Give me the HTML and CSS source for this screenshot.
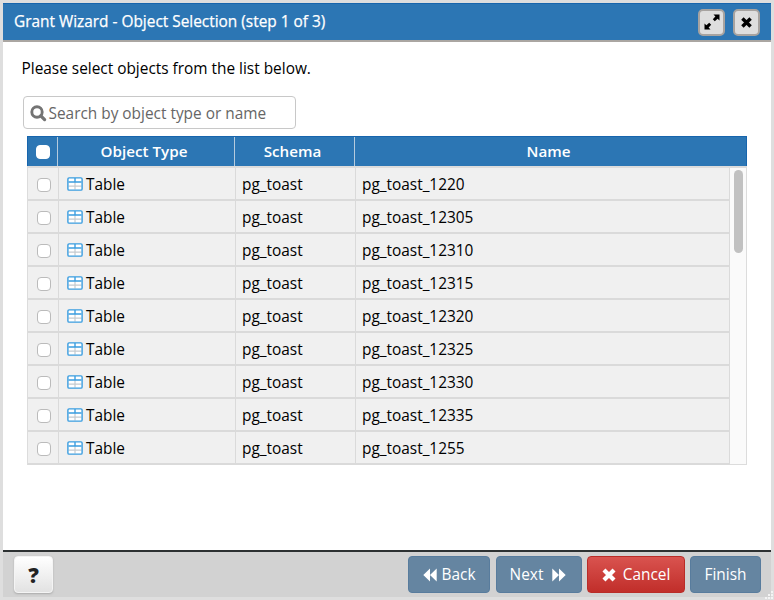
FILE: index.html
```html
<!DOCTYPE html>
<html lang="en">
<head>
<meta charset="utf-8">
<title>Grant Wizard</title>
<link rel="stylesheet" href="styles.css">
</head>
<body>
<svg class="defs" width="0" height="0" aria-hidden="true">
  <symbol id="icon-table" viewBox="0 0 16 14">
    <rect x="1" y="1" width="14" height="12" rx="1" fill="#fff"/>
    <path d="M1.5 9.2h13M8 5v7.5" stroke="#c4cacf" stroke-width="1.2"/>
    <path d="M1.5 5h13M8 1v4" stroke="#3a9de0" stroke-width="1.4"/>
    <rect x=".9" y=".9" width="14.2" height="12.2" rx="1.2" fill="none" stroke="#3a9de0" stroke-width="1.4"/>
  </symbol>
  <symbol id="icon-times" viewBox="0 0 14 14">
    <path d="M2.6 2.6 11.4 11.4M11.4 2.6 2.6 11.4" stroke="currentColor" stroke-width="3.7"/>
  </symbol>
</svg>
<div class="dialog">
  <header class="titlebar">
    <h1 class="title">Grant Wizard - Object Selection (step 1 of 3)</h1>
    <button class="tool" aria-label="Maximize">
      <svg width="18" height="18" viewBox="0 0 18 18"><path d="M10.5 1.5H16.500V7.500L14.600 5.700 11.800 8.200 9.800 6.200 12.400 3.500ZM7.500 16.500H1.500V10.500L3.400 12.300 6.200 9.800 8.200 11.800 5.600 14.500Z" fill="#000"/></svg>
    </button>
    <button class="tool" aria-label="Close">
      <svg width="13" height="13"><use href="#icon-times"/></svg>
    </button>
  </header>
  <main class="content">
    <p class="intro">Please select objects from the list below.</p>
    <div class="search">
      <svg width="17" height="17" viewBox="0 0 17 17"><circle cx="7" cy="7" r="5.200" fill="none" stroke="#747474" stroke-width="2.900"/><path d="M10.800 10.800 14.600 14.600" stroke="#747474" stroke-width="3.300" stroke-linecap="round"/></svg>
      <span class="placeholder">Search by object type or name</span>
    </div>
    <div class="grid">
      <div class="grid-head">
        <div class="th"><span class="check check-all"></span></div>
        <div class="th th-type">Object Type</div>
        <div class="th th-schema">Schema</div>
        <div class="th th-name">Name</div>
      </div>
      <div class="grid-body">
        <div class="rows" id="rows"></div>
        <div class="scroll"><div class="thumb"></div></div>
      </div>
    </div>
  </main>
  <footer class="footer">
    <button class="btn help">?</button>
    <button class="btn nav back"><svg width="14" height="14" viewBox="0 0 14 14"><path d="M7 .5V13.500L.3 7ZM13.700 .5V13.500L7 7Z" fill="currentColor"/></svg><span>Back</span></button>
    <button class="btn nav next"><span>Next</span><svg width="14" height="14" viewBox="0 0 14 14"><path d="M.3 .5V13.500L7 7ZM7 .5V13.500L13.700 7Z" fill="currentColor"/></svg></button>
    <button class="btn cancel"><svg width="16" height="16"><use href="#icon-times"/></svg><span>Cancel</span></button>
    <button class="btn nav finish"><span>Finish</span></button>
  </footer>
</div>
<svg class="grip" width="9" height="9" viewBox="0 0 9 9"><path d="M6 0h2v2H6zM3 3h2v2H3zM6 3h2v2H6zM0 6h2v2H0zM3 6h2v2H3zM6 6h2v2H6z" fill="#f4f4f4"/></svg>
<script src="rows.js"></script>
</body>
</html>
```
FILE: rows.js
```js
const names = [1220, 12305, 12310, 12315, 12320, 12325, 12330, 12335, 1255];
document.getElementById('rows').innerHTML = names.map(n => `
  <div class="row">
    <div class="td td-check"><span class="check"></span></div>
    <div class="td td-type"><svg width="16" height="14"><use href="#icon-table"/></svg><span>Table</span></div>
    <div class="td">pg_toast</div>
    <div class="td">pg_toast_${n}</div>
  </div>`).join('');
```
FILE: styles.css
```css
* { box-sizing: border-box; }
body {
  margin: 0;
  width: 774px;
  height: 600px;
  overflow: hidden;
  background: #dedede;
  padding: 3px;
  font: 15.4px/20px "Open Sans", "Noto Sans", sans-serif;
  color: #000;
}
.defs { position: absolute; }
.dialog {
  height: 594px;
  display: flex;
  flex-direction: column;
  background: #fff;
}
.titlebar {
  height: 39px;
  flex: none;
  display: flex;
  align-items: center;
  gap: 8px;
  padding: 0 11px;
  background: #2c76b4;
  border-top: 1px solid #1765ad;
  border-bottom: 2px solid #aaa6a2;
}
.title {
  flex: 1;
  margin: 0;
  padding-bottom: 1px;
  font-size: 15.4px;
  font-weight: 400;
  line-height: 20px;
  color: #fff;
  -webkit-text-stroke: .25px #fff;
}
.tool {
  width: 27px;
  height: 27px;
  padding: 0;
  display: flex;
  align-items: center;
  justify-content: center;
  background: #dedede;
  border: 2px solid #a7a3a0;
  border-radius: 5px;
  color: #000;
}
.content { flex: 1; padding: 17px 24px 0 20px; }
.intro { margin: 0 0 17px -1.5px; }
.search {
  width: 273px;
  height: 33px;
  display: flex;
  align-items: center;
  gap: 2px;
  padding: 2px 0 0 5.5px;
  border: 1px solid #c8c8c8;
  border-radius: 4px;
  color: #666;
}
.grid { margin: 7px 0 0 4px; width: 720px; }
.grid-head, .row {
  display: grid;
  grid-template-columns: 31px 177px 120px 1fr;
}
.grid-head {
  height: 30px;
  background: #2c76b4;
  border: 1px solid #1765ad;
  border-bottom: 0;
  color: #fff;
  font-weight: 600;
  font-size: 15.2px;
  grid-template-columns: 30px 177px 120px 1fr;
}
.th { display: flex; align-items: center; justify-content: center; padding-bottom: 2px; }
.th:not(:last-child) { border-right: 1px solid #b5cbde; }
.th-type { padding-right: 4px; }
.th-schema { padding-right: 4px; }
.th-name { padding-right: 4px; }
.grid-body {
  display: flex;
  height: 299px;
  border: 1px solid #dcdcdc;
  border-top-width: 2px;
}
.rows { flex: 1; }
.row { height: 33px; background: #f0f0f0; border-bottom: 2px solid #dadada; }
.td { display: flex; align-items: center; padding: 2px 0 0 6px; border-right: 1px solid #dadada; }
.td-check { padding-left: 9px; }
.td-type { gap: 3px; padding-left: 8px; }
.td-type svg { margin-top: -2px; }
.check {
  width: 14px;
  height: 14px;
  border: 1px solid #bbb;
  border-radius: 4px;
  background: #fff;
}
.check-all { border-color: #fff; margin-top: 2px; }
.scroll { width: 16px; background: #fafafa; padding: 2px 0 0 4px; }
.thumb { width: 9px; height: 83px; border-radius: 5px; background: #c1c1c1; }
.footer {
  height: 47px;
  flex: none;
  display: flex;
  padding: 4px 10px 0 11px;
  background: #d2d2d2;
  border-top: 2px solid #2d3132;
}
.btn {
  height: 37px;
  display: flex;
  align-items: center;
  justify-content: center;
  padding: 1px 0 0;
  border: 1px solid;
  border-radius: 4px;
  font: inherit;
  color: #fff;
}
.nav { background: #6585a1; border-color: #587c9d; }
.help {
  width: 39px;
  margin-right: auto;
  border-color: #f4f4f4;
  background: linear-gradient(#fff, #e2e2e2);
  box-shadow: 0 1px 2px #aaa;
  color: #222;
  font-size: 21px;
  font-weight: 800;
}
.back { width: 82px; gap: 5px; margin-right: 6px; }
.next { width: 86px; gap: 9px; margin-right: 5px; padding-right: 2px; }
.cancel {
  width: 98px;
  gap: 6px;
  margin-right: 5px;
  padding-right: 1px;
  border-color: #b92c28;
  background: linear-gradient(#d9534f, #c12e2a);
}
.finish { width: 71px; }
.grip { position: absolute; right: 0; bottom: 0; }
```
